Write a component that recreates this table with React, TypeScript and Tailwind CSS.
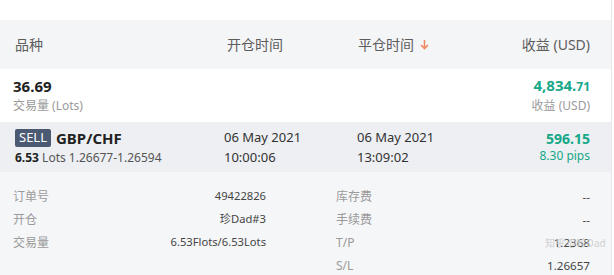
import React from "react";

const font = { fontFamily: '"Noto Sans", "Noto Sans CJK SC", sans-serif' };

const details = [
  { left: ["订单号", "49422826"], right: ["库存费", "--"] },
  { left: ["开仓", "珍Dad#3"], right: ["手续费", "--"] },
  { left: ["交易量", "6.53Flots/6.53Lots"], right: ["T/P", "1.2368"] },
  { left: null, right: ["S/L", "1.26657"] },
];

const App = () => {
  return (
    <div className="h-[275px] w-[614px] overflow-hidden bg-white" style={font}>
      <div className="relative h-full w-[612px] border-r border-[#e4e6ea]">
        {/* Top spacer */}
        <div className="h-[20px]" />

        {/* Table header */}
        <div className="grid h-[49px] grid-cols-[209px_133px_1fr_auto] items-center bg-[#f4f5f7] pl-[15px] pr-[21px] text-[14px] text-[#5c5c5c]">
          <span>品种</span>
          <span className="pl-[3px]">开仓时间</span>
          <span className="flex items-center gap-[6px] pl-[1px]">
            平仓时间
            <svg width="9" height="11" viewBox="0 0 9 11" fill="none">
              <path d="M4.5 1v8.5M1 6l3.5 3.5L8 6" stroke="#f08a62" strokeWidth="1.6" />
            </svg>
          </span>
          <span className="text-right">收益 (USD)</span>
        </div>

        {/* Summary */}
        <div className="flex h-[53px] items-center justify-between pl-[13px] pr-[21px]">
          <div className="flex flex-col leading-[19px]">
            <span className="text-[15px] font-bold text-[#222]">36.69</span>
            <span className="text-[12px] text-[#9a9a9a]">交易量 (Lots)</span>
          </div>
          <div className="flex flex-col items-end leading-[19px]">
            <span className="font-bold text-[#16a888]">
              <span className="text-[15px]">4,834.</span>
              <span className="text-[12px]">71</span>
            </span>
            <span className="text-[12px] text-[#9a9a9a]">收益 (USD)</span>
          </div>
        </div>

        {/* Trade row */}
        <div className="grid h-[50px] grid-cols-[209px_133px_1fr_auto] items-center bg-[#edeff2] pl-[15px] pr-[21px]">
          <div className="flex flex-col gap-[3px]">
            <div className="flex items-center gap-[5px]">
              <span className="flex h-[18px] w-[36px] items-center justify-center rounded-[2px] bg-[#4b5a72] text-[13px] text-white">
                SELL
              </span>
              <span className="text-[15px] font-bold leading-none text-[#222]">GBP/CHF</span>
            </div>
            <div className="text-[12px] leading-[15px] text-[#555]">
              <span className="font-bold text-[#222]">6.53</span> Lots 1.26677-1.26594
            </div>
          </div>
          <div className="flex flex-col text-[13px] leading-[20px] text-[#333]">
            <span>06 May 2021</span>
            <span>10:00:06</span>
          </div>
          <div className="flex flex-col text-[13px] leading-[20px] text-[#333]">
            <span>06 May 2021</span>
            <span>13:09:02</span>
          </div>
          <div className="flex flex-col items-end leading-[17px] text-[#16a888]">
            <span className="text-[14px] font-bold">596.15</span>
            <span className="text-[12px]">8.30 pips</span>
          </div>
        </div>

        {/* Details */}
        <div className="h-[103px] bg-[#f5f6f8] pl-[13px] pr-[21px] pt-[13px]">
          {details.map((row, i) => (
            <div key={i} className="grid h-[23px] grid-cols-[253px_1fr] items-center gap-x-[70px] text-[12px]">
              {row.left ? (
                <div className="flex items-center justify-between">
                  <span className="text-[#9a9a9a]">{row.left[0]}</span>
                  <span className="text-[11.2px] text-[#444]">{row.left[1]}</span>
                </div>
              ) : (
                <div />
              )}
              <div className="flex items-center justify-between">
                <span className="text-[#9a9a9a]">{row.right[0]}</span>
                <span className="text-[11.6px] text-[#444]">{row.right[1]}</span>
              </div>
            </div>
          ))}
        </div>

        {/* Watermark */}
        <span className="absolute left-[545px] top-[236px] text-[10px] text-[#d0d0d0]">知乎 @珍Dad</span>
      </div>
    </div>
  );
};

export default App;
